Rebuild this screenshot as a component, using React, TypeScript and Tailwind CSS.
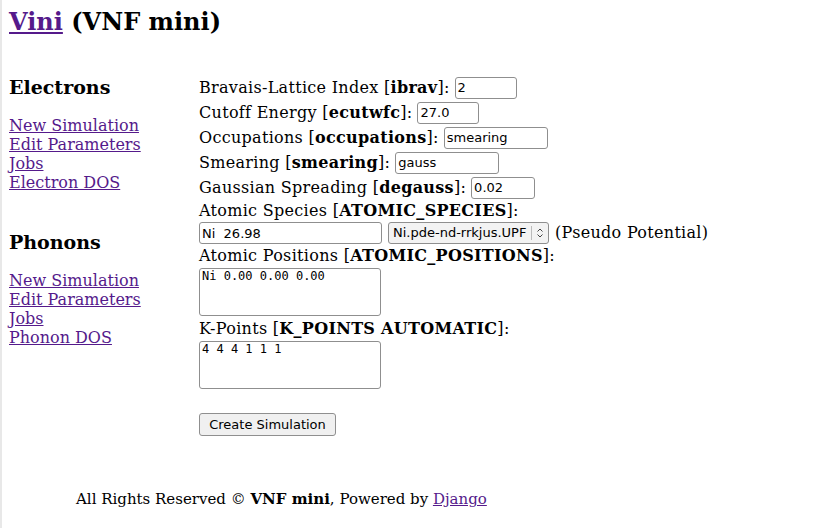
import React from 'react'

const serif = { fontFamily: '"DejaVu Serif", serif' }

const box =
  "h-[22px] border border-[#8f8f8f] rounded-[3px] px-[2px] text-[13px] tracking-normal font-['DejaVu_Sans',sans-serif] bg-white"

const Field = (props: { label: string; code: string; value: string; w: string }) => (
  <div className="flex items-center h-[25px]">
    <span>
      {props.label} [<b>{props.code}</b>]:
    </span>
    <input readOnly value={props.value} className={`ml-[5px] ${props.w} ${box}`} />
  </div>
)

const SideLinks = (props: { title: string; items: string[]; last?: boolean }) => (
  <div className={props.last ? '' : 'mb-[38px]'}>
    <h3 className="text-[19px] font-bold leading-[25px] mb-[16px]">{props.title}</h3>
    <ul className="leading-[19px]">
      {props.items.map((i) => (
        <li key={i}>
          <a href="#" className="underline text-[#551a8b]">
            {i}
          </a>
        </li>
      ))}
    </ul>
  </div>
)

export default function App() {
  return (
    <div className="min-h-[528px] bg-white text-black border-l-2 border-[#e8e8e8] text-[16px]" style={serif}>
      <div className="px-[7px] pt-[8px]">
        <h1 className="text-[24px] font-bold leading-[28px]">
          <a href="#" className="underline text-[#551a8b]">Vini</a> (VNF mini)
        </h1>
        <div className="flex mt-[39px]">
          <div className="w-[190px]">
            <SideLinks title="Electrons" items={['New Simulation', 'Edit Parameters', 'Jobs', 'Electron DOS']} />
            <SideLinks title="Phonons" items={['New Simulation', 'Edit Parameters', 'Jobs', 'Phonon DOS']} last />
          </div>
          <div className="flex flex-col tracking-[0.3px]">
            <Field label="Bravais-Lattice Index" code="ibrav" value="2" w="w-[62px]" />
            <Field label="Cutoff Energy" code="ecutwfc" value="27.0" w="w-[62px]" />
            <Field label="Occupations" code="occupations" value="smearing" w="w-[104px]" />
            <Field label="Smearing" code="smearing" value="gauss" w="w-[104px]" />
            <Field label="Gaussian Spreading" code="degauss" value="0.02" w="w-[64px]" />
            <div className="h-[22px] flex items-center">
              <span>
                Atomic Species [<b>ATOMIC_SPECIES</b>]:
              </span>
            </div>
            <div className="flex items-center gap-[6px] h-[22px]">
              <input readOnly value="Ni  26.98" className={`w-[183px] ${box}`} />
              <div className="flex items-center w-[161px] h-[22px] border border-[#8f8f8f] rounded-[3px] bg-[#f3f3f3] text-[13px] tracking-normal font-['DejaVu_Sans',sans-serif]">
                <span className="flex-1 px-[4px] whitespace-nowrap overflow-hidden">Ni.pde-nd-rrkjus.UPF</span>
                <span className="w-px h-[14px] bg-[#bbb]" />
                <svg width="14" height="14" viewBox="0 0 14 14" className="mx-[1px]">
                  <path d="M4.5 5.5 L7 3 L9.5 5.5 M4.5 8.5 L7 11 L9.5 8.5" stroke="#444" strokeWidth="1" fill="none" />
                </svg>
              </div>
              <span>(Pseudo Potential)</span>
            </div>
            <div className="h-[24px] flex items-center">
              <span>
                Atomic Positions [<b>ATOMIC_POSITIONS</b>]:
              </span>
            </div>
            <textarea
              readOnly
              value="Ni 0.00 0.00 0.00"
              className="w-[182px] h-[48px] border border-[#8f8f8f] rounded-[3px] px-[2px] text-[12px] leading-[14px] tracking-normal font-['DejaVu_Sans_Mono',monospace] resize-none"
            />
            <div className="h-[25px] flex items-center">
              <span>
                K-Points [<b>K_POINTS AUTOMATIC</b>]:
              </span>
            </div>
            <textarea
              readOnly
              value="4 4 4 1 1 1"
              className="w-[182px] h-[48px] border border-[#8f8f8f] rounded-[3px] px-[2px] text-[12px] leading-[14px] tracking-normal font-['DejaVu_Sans_Mono',monospace] resize-none"
            />
            <div className="mt-[23px]">
              <button className="w-[137px] h-[23px] border border-[#8f8f8f] rounded-[3px] bg-[#f0f0f0] text-[13px] tracking-normal font-['DejaVu_Sans',sans-serif]">
                Create Simulation
              </button>
            </div>
          </div>
        </div>
        <div className="mt-[53px] pl-[67px] leading-[20px] text-[15px]">
          All Rights Reserved © <b>VNF mini</b>, Powered by{' '}
          <a href="#" className="underline text-[#551a8b]">Django</a>
        </div>
      </div>
    </div>
  )
}
